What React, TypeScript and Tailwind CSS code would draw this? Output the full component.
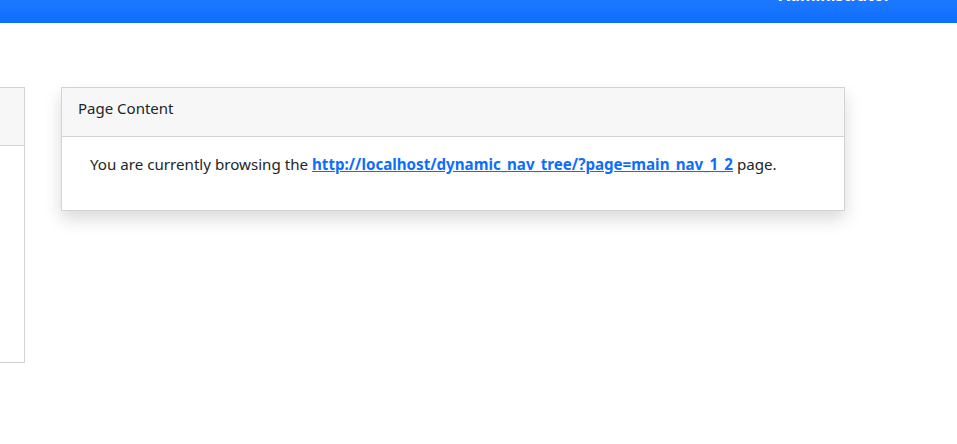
import React from "react";

export default function App() {
  return (
    <div className="w-[957px] h-[444px] overflow-hidden bg-white" style={{ fontFamily: '"Noto Sans", "Open Sans", sans-serif' }}>
      <div className="h-[23px] bg-gradient-to-b from-[#1c78ff] to-[#0d6efd] flex justify-end items-start pr-[66px] overflow-hidden">
        <span className="text-white font-bold text-[16px] leading-[16px] -mt-[13px]">Administrator</span>
      </div>
      <div className="flex items-start mt-[64px]">
        <div className="-ml-[200px] w-[225px] h-[276px] border border-[#d3d3d3] flex flex-col shrink-0">
          <div className="h-[58px] bg-[#f7f7f7] border-b border-[#d3d3d3]"></div>
          <div className="flex-1"></div>
        </div>
        <div className="ml-[36px] w-[784px] border border-[#d3d3d3] bg-white shadow-[0_8px_16px_rgba(0,0,0,0.15)] shrink-0">
          <div className="h-[49px] bg-[#f7f7f7] border-b border-[#d3d3d3] px-[16px] pt-[8px] leading-[24px] text-[15px] text-[#212529]">
            Page Content
          </div>
          <div className="h-[73px] px-[28px] pt-[16px] text-[15.15px] text-[#212529]">
            You are currently browsing the{" "}
            <a href="#" className="font-bold text-[#0d6efd] underline">http://localhost/dynamic_nav_tree/?page=main_nav_1_2</a>{" "}
            page.
          </div>
        </div>
      </div>
    </div>
  );
}
